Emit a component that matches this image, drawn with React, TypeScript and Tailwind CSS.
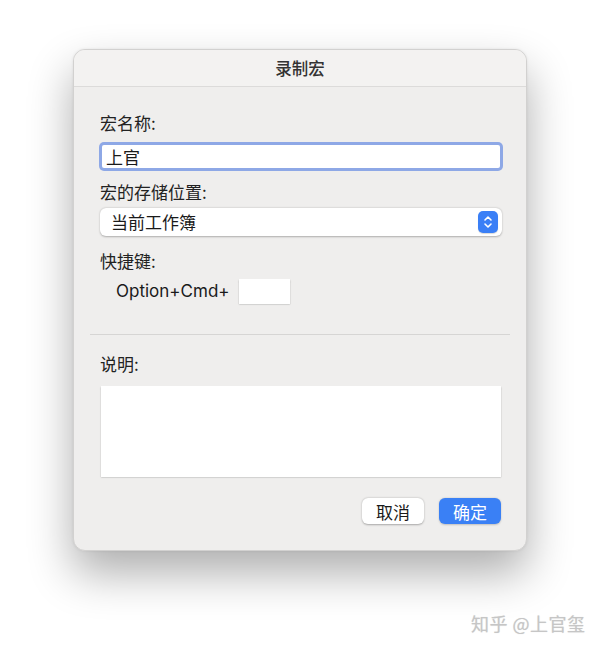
import React from 'react';

const font = { fontFamily: '"Noto Sans CJK SC", "Liberation Sans", sans-serif' };

// Up/down stepper glyph used by macOS popup buttons
const Stepper = () => (
  <div className="w-[20px] h-[22px] rounded-[5px] bg-[#3a7ff6] flex items-center justify-center shadow-[0_1px_1px_rgba(0,0,0,0.15)]">
    <svg width="10" height="16" viewBox="0 0 10 16" fill="none">
      <path d="M2 6 L5 3 L8 6" stroke="white" strokeWidth="1.6" strokeLinecap="round" strokeLinejoin="round" />
      <path d="M2 10 L5 13 L8 10" stroke="white" strokeWidth="1.6" strokeLinecap="round" strokeLinejoin="round" />
    </svg>
  </div>
);

export default function App() {
  return (
    <div className="relative w-[600px] h-[648px] bg-white pt-[49px] pl-[73px]" style={font}>
      <div className="w-[454px] h-[502px] rounded-[12px] bg-[#efeeed] border border-[#d2d1d0] shadow-[0_22px_45px_rgba(0,0,0,0.32),0_0_3px_rgba(0,0,0,0.08)] flex flex-col overflow-hidden">
        {/* title bar */}
        <div className="h-[37px] shrink-0 flex items-center justify-center bg-[#f3f2f1] border-b border-[#dcdbda]">
          <span className="text-[16.5px] font-medium text-[#333] leading-none">录制宏</span>
        </div>

        <div className="flex flex-col pt-[26px] text-[17px] text-[#222]">
          <div className="pl-[26px] leading-[20px]">宏名称:</div>

          <div className="mt-[9px] ml-[25px] w-[404px] h-[29px] rounded-[5px] bg-[#8ea8e6] p-[3px]">
            <div className="w-full h-full bg-white rounded-[2px] flex items-center pl-[4px] text-[17px] text-[#1a1a1a]">上官</div>
          </div>

          <div className="mt-[11px] pl-[26px] leading-[20px]">宏的存储位置:</div>

          <div className="mt-[6px] ml-[26px] w-[402px] h-[28px] rounded-[6px] bg-white shadow-[0_0.5px_2px_rgba(0,0,0,0.28)] flex items-center justify-between pl-[11px] pr-[4px]">
            <span className="text-[17px] text-[#1a1a1a]">当前工作簿</span>
            <Stepper />
          </div>

          <div className="mt-[15px] pl-[26px] leading-[20px]">快捷键:</div>

          <div className="mt-[8px] pl-[42px] flex items-center h-[25px]">
            <span className="text-[17px] text-[#1a1a1a] w-[123px]" style={{ fontFamily: 'Inter, "Liberation Sans", sans-serif' }}>Option+Cmd+</span>
            <div className="w-[51px] h-[25px] bg-white shadow-[0_0.5px_1.5px_rgba(0,0,0,0.3)]" />
          </div>

          <div className="mt-[30px] mx-[16px] h-px bg-[#d6d5d4]" />

          <div className="mt-[19px] pl-[26px] leading-[20px]">说明:</div>

          <div className="mt-[12px] ml-[27px] w-[400px] h-[91px] bg-white shadow-[0_0.5px_1.5px_rgba(0,0,0,0.3)]" />

          <div className="mt-[21px] pr-[25px] flex justify-end gap-[15px]">
            <button className="w-[62px] h-[26px] rounded-[6px] bg-white shadow-[0_0.5px_2px_rgba(0,0,0,0.3)] text-[17px] text-[#1a1a1a] leading-none">取消</button>
            <button className="w-[62px] h-[26px] rounded-[6px] bg-[#3a80f5] shadow-[0_0.5px_2px_rgba(0,0,0,0.2)] text-[17px] text-white leading-none">确定</button>
          </div>
        </div>
      </div>

      {/* watermark */}
      <div className="absolute left-[471px] top-[610px] text-[18px] text-[#c6c6c6] tracking-[0.5px] [text-shadow:0_0_1px_rgba(0,0,0,0.15)]">知乎 @上官玺</div>
    </div>
  );
}
